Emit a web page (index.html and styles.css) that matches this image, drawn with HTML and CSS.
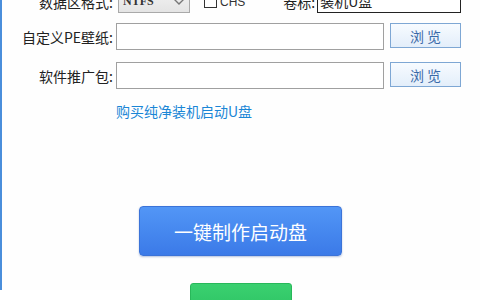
FILE: index.html
```html
<!DOCTYPE html>
<html>
<head>
<meta charset="utf-8">
<link rel="stylesheet" href="styles.css">
</head>
<body>
<div class="page">
  <div class="form">
    <div class="row row-top">
      <span class="label">数据区格式:</span>
      <div class="select"><span class="select-text">NTFS</span><svg class="arrow" width="12" height="8" viewBox="0 0 12 8"><path d="M1 1 L6 6 L11 1" fill="none" stroke="#777" stroke-width="1.4"/></svg></div>
      <span class="check"></span><span class="chs">CHS</span>
      <span class="vol-label">卷标:</span>
      <div class="input input-vol">装机U盘</div>
    </div>
    <div class="row row-file">
      <span class="label">自定义PE壁纸:</span>
      <div class="input input-file"></div>
      <button class="browse">浏 览</button>
    </div>
    <div class="row row-file">
      <span class="label">软件推广包:</span>
      <div class="input input-file"></div>
      <button class="browse">浏 览</button>
    </div>
    <a class="buy-link">购买纯净装机启动U盘</a>
  </div>
  <div class="actions">
    <button class="make-btn">一键制作启动盘</button>
    <button class="green-btn"></button>
  </div>
</div>
</body>
</html>
```
FILE: styles.css
```css
html, body {
  margin: 0;
  padding: 0;
  background: #fff;
  overflow: hidden;
}
body {
  width: 480px;
  height: 300px;
  font-family: "Noto Sans CJK SC", "Noto Sans", sans-serif;
  color: #222;
}
.page {
  height: 300px;
  border-left: 2px solid #4a8edb;
  background: #fefefe;
  box-sizing: border-box;
}
.form {
  margin-top: -10px;
}
.row {
  display: flex;
  align-items: center;
}
.label {
  width: 111px;
  text-align: right;
  font-size: 14px;
  line-height: 16px;
  color: #222;
  flex: none;
}
.row-top {
  height: 23px;
}
.select {
  margin-left: 5px;
  width: 72px;
  height: 23px;
  box-sizing: border-box;
  border: 1px solid #a9a9a9;
  background: linear-gradient(#f2f2f2, #e4e4e4);
  display: flex;
  align-items: center;
  justify-content: space-between;
  padding: 0 4px 0 4px;
}
.select-text {
  font-family: "Liberation Serif", serif;
  font-weight: bold;
  font-size: 12px;
  color: #333;
}
.check {
  margin-left: 14px;
  width: 13px;
  height: 13px;
  box-sizing: border-box;
  border: 1px solid #333;
  background: #fff;
}
.chs {
  margin-left: 3px;
  font-family: "Liberation Sans", sans-serif;
  font-size: 12px;
  color: #333;
}
.vol-label {
  margin-left: 38px;
  font-size: 14px;
  color: #222;
}
.input {
  box-sizing: border-box;
  background: #fff;
  border: 1px solid #a0a0a0;
}
.input-vol {
  margin-left: 2px;
  width: 144px;
  height: 23px;
  border-color: #222;
  font-size: 14px;
  line-height: 20px;
  padding-left: 2px;
}
.row-file {
  height: 27px;
}
.row-file:nth-child(2) {
  margin-top: 10px;
}
.row-file:nth-child(3) {
  margin-top: 12px;
}
.input-file {
  margin-left: 3px;
  width: 268px;
  height: 27px;
}
.browse {
  margin-left: 6px;
  width: 71px;
  height: 25px;
  box-sizing: border-box;
  border: 1px solid #7ea7d4;
  background: linear-gradient(#f7fbff, #e3eefa);
  color: #3a6aa8;
  font-family: "Noto Sans CJK SC", sans-serif;
  font-size: 14px;
  padding: 0;
  align-self: flex-start;
}
.buy-link {
  display: block;
  margin-top: 13px;
  margin-left: 114px;
  font-size: 14px;
  line-height: 18px;
  color: #1a86d6;
}
.actions {
  display: flex;
  flex-direction: column;
  align-items: flex-start;
}
.make-btn {
  margin-top: 86px;
  margin-left: 137px;
  width: 203px;
  height: 50px;
  border: 1px solid #3b73d8;
  border-radius: 4px;
  background: linear-gradient(#5296f6, #3b7ae8);
  box-shadow: 0 1px 2px rgba(40, 80, 160, 0.35);
  color: #fff;
  font-family: "Noto Sans CJK SC", sans-serif;
  font-size: 19px;
  padding: 0;
}
.green-btn {
  margin-top: 27px;
  margin-left: 188px;
  width: 102px;
  height: 30px;
  border: 1px solid #28b85a;
  border-radius: 3px;
  background: linear-gradient(#3ad070, #2ec463);
  padding: 0;
}
```
